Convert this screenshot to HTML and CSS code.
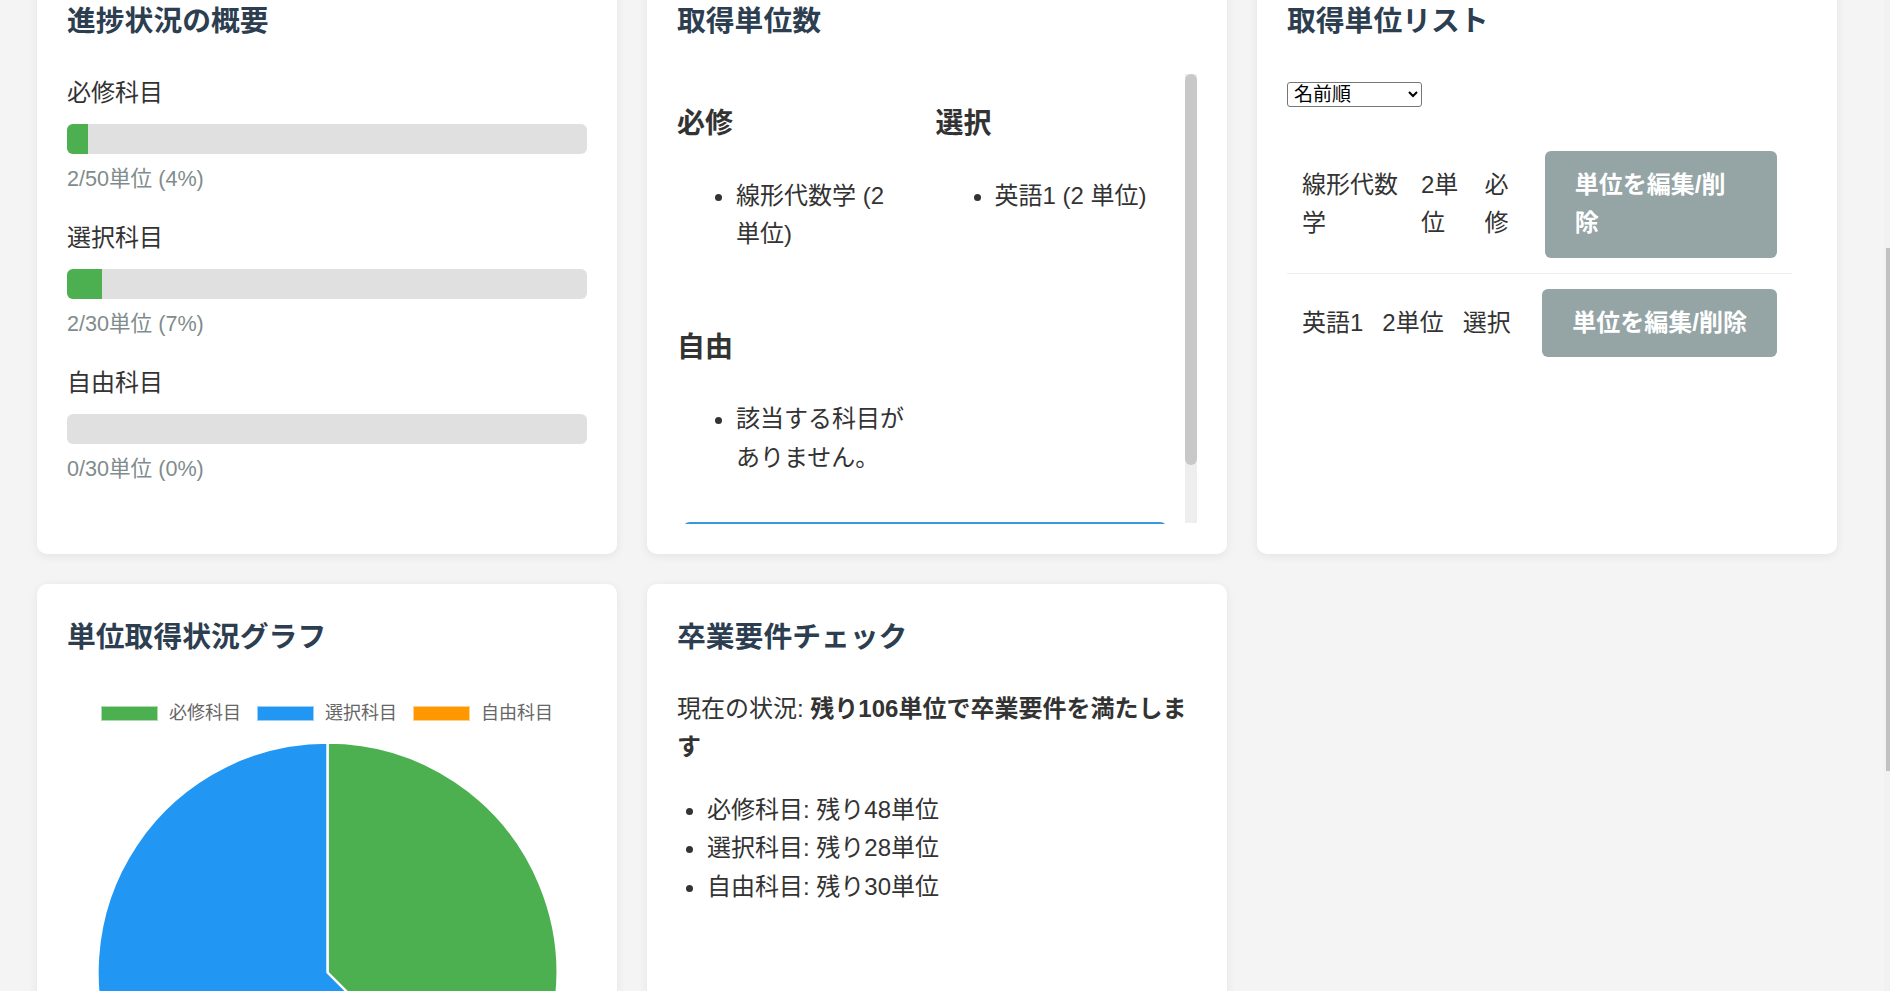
FILE: index.html
```html
<!DOCTYPE html>
<html lang="ja">
<head>
<meta charset="UTF-8">
<title>単位管理ダッシュボード</title>
<link rel="stylesheet" href="styles.css">
</head>
<body>
<main class="dashboard">
  <section class="card">
    <h2 class="card-title">進捗状況の概要</h2>
    <div class="progress-item">
      <div class="progress-label">必修科目</div>
      <div class="progress-track"><div class="progress-fill" style="width:4%"></div></div>
      <div class="progress-text">2/50単位 (4%)</div>
    </div>
    <div class="progress-item">
      <div class="progress-label">選択科目</div>
      <div class="progress-track"><div class="progress-fill" style="width:6.67%"></div></div>
      <div class="progress-text">2/30単位 (7%)</div>
    </div>
    <div class="progress-item">
      <div class="progress-label">自由科目</div>
      <div class="progress-track"><div class="progress-fill" style="width:0%"></div></div>
      <div class="progress-text">0/30単位 (0%)</div>
    </div>
  </section>

  <section class="card">
    <h2 class="card-title">取得単位数</h2>
    <div class="credit-scroll">
      <div class="credit-scroll-content">
        <div class="type-grid">
          <div class="type-section">
            <h3 class="type-title">必修</h3>
            <ul class="type-list"><li>線形代数学 (2 単位)</li></ul>
          </div>
          <div class="type-section">
            <h3 class="type-title">選択</h3>
            <ul class="type-list"><li>英語1 (2 単位)</li></ul>
          </div>
          <div class="type-section">
            <h3 class="type-title">自由</h3>
            <ul class="type-list"><li>該当する科目がありません。</li></ul>
          </div>
        </div>
        <div class="total-box"></div>
      </div>
      <div class="scroll-track"><div class="scroll-thumb"></div></div>
    </div>
  </section>

  <section class="card">
    <h2 class="card-title">取得単位リスト</h2>
    <div class="sort-bar">
      <select class="sort-select">
        <option>名前順</option>
      </select>
    </div>
    <ul class="credit-list">
      <li class="credit-row">
        <span class="c-name">線形代数学</span>
        <span class="c-credits">2単位</span>
        <span class="c-type">必修</span>
        <button class="edit-btn" type="button">単位を編集/削除</button>
      </li>
      <li class="credit-row">
        <span class="c-name">英語1</span>
        <span class="c-credits">2単位</span>
        <span class="c-type">選択</span>
        <button class="edit-btn" type="button">単位を編集/削除</button>
      </li>
    </ul>
  </section>

  <section class="card">
    <h2 class="card-title">単位取得状況グラフ</h2>
    <div class="chart">
      <div class="legend">
        <span class="legend-item"><span class="legend-box legend-green"></span>必修科目</span>
        <span class="legend-item"><span class="legend-box legend-blue"></span>選択科目</span>
        <span class="legend-item"><span class="legend-box legend-orange"></span>自由科目</span>
      </div>
      <svg class="pie" width="463" height="463" viewBox="0 0 463 463">
        <path d="M231.5 231.5 L231.5 1.5 A230 230 0 0 1 394.13 394.13 Z" fill="#4caf50" stroke="#ffffff" stroke-width="2.4" stroke-linejoin="round"/>
        <path d="M231.5 231.5 L394.13 394.13 A230 230 0 1 1 231.5 1.5 Z" fill="#2196f3" stroke="#ffffff" stroke-width="2.4" stroke-linejoin="round"/>
      </svg>
    </div>
  </section>

  <section class="card">
    <h2 class="card-title">卒業要件チェック</h2>
    <p class="status">現在の状況: <strong>残り106単位で卒業要件を満たします</strong></p>
    <ul class="remain-list">
      <li>必修科目: 残り48単位</li>
      <li>選択科目: 残り28単位</li>
      <li>自由科目: 残り30単位</li>
    </ul>
  </section>
</main>
<div class="page-scrollbar"><div class="page-scrollbar-thumb"></div></div>
<script src="script.js"></script>
</body>
</html>
```

FILE: styles.css
```css
html, body {
  margin: 0;
  padding: 0;
}

body {
  background: #f4f4f4;
  color: #333333;
  font-family: "Liberation Sans", "Noto Sans CJK JP", sans-serif;
  font-size: 24px;
  line-height: 1.6;
}

.dashboard {
  display: grid;
  grid-template-columns: repeat(3, minmax(0, 1fr));
  gap: 30px;
  width: 1800px;
  padding: 438px 0 173px 37px;
  align-items: stretch;
}

.card {
  background: #ffffff;
  border-radius: 10px;
  box-shadow: 0 2px 10px rgba(0, 0, 0, 0.07);
  padding: 30px;
  min-width: 0;
}

.card-title {
  margin: 0 0 30px;
  font-size: 28.8px;
  line-height: 46px;
  color: #2c3e50;
  font-weight: 700;
}

/* progress */
.progress-item {
  margin-bottom: 22px;
}
.progress-label {
  margin-bottom: 12px;
}
.progress-track {
  height: 30px;
  background: #e0e0e0;
  border-radius: 6px;
  overflow: hidden;
}
.progress-fill {
  height: 100%;
  background: #4caf50;
}
.progress-text {
  margin-top: 8px;
  font-size: 21.6px;
  color: #7f8c8d;
}

/* credits by type */
.credit-scroll {
  display: flex;
  height: 450px;
}
.credit-scroll-content {
  flex: 1 1 auto;
  min-width: 0;
  overflow: hidden;
}
.scroll-track {
  flex: 0 0 12px;
  height: 449px;
  background: #eeeeee;
}
.scroll-thumb {
  height: 391px;
  background: #c8c8c8;
  border-radius: 6px;
}
.type-grid {
  display: flex;
  flex-wrap: wrap;
  column-gap: 30px;
  row-gap: 20px;
}
.type-section {
  width: 45%;
}
.type-title {
  margin: 28px 0;
  font-size: 28px;
  line-height: 1.6;
  color: #333333;
}
.type-list {
  margin: 30px 0 24px;
  padding-left: 59px;
}
.total-box {
  margin: 21px 0 8px 5px;
  width: 482px;
  height: 60px;
  border: 2px solid #3498db;
  border-radius: 8px;
}

/* credit list */
.sort-bar {
  padding-top: 8px;
  margin-bottom: 29px;
  line-height: 0;
}
.sort-select {
  width: 135px;
  height: 25px;
  padding: 0 2px;
  font-family: "Liberation Sans", "Noto Sans CJK JP", sans-serif;
  font-size: 19px;
  color: #000000;
  background: #ffffff;
  border: 1px solid #767676;
  border-radius: 3px;
}
.credit-list {
  list-style: none;
  margin: 0;
  padding: 0;
  width: calc(100% - 15px);
}
.credit-row {
  display: flex;
  align-items: center;
  padding: 15px;
  border-bottom: 1px solid #eeeeee;
}
.credit-row:last-child {
  border-bottom: none;
}
.c-name {
  flex: 0 1 auto;
  max-width: 100px;
  margin-right: 19px;
}
.c-credits {
  flex: 0 2 auto;
  margin-right: 19px;
}
.c-type {
  flex: 1 1 auto;
  margin-right: 19px;
}
.edit-btn {
  flex: 0 0.1 auto;
  padding: 15px 30px;
  border: none;
  border-radius: 6px;
  background: #95a5a6;
  color: #ffffff;
  font-family: "Liberation Sans", "Noto Sans CJK JP", sans-serif;
  font-size: 24px;
  font-weight: 700;
  line-height: 1.6;
  text-align: left;
  cursor: pointer;
}

/* chart */
.chart {
  display: flex;
  flex-direction: column;
  align-items: center;
}
.legend {
  display: flex;
  justify-content: center;
  gap: 16px;
  padding-top: 16px;
  font-size: 18px;
  line-height: 15px;
  color: #666666;
}
.legend-item {
  display: flex;
  align-items: center;
  gap: 11px;
}
.legend-box {
  width: 57px;
  height: 15px;
  box-sizing: border-box;
  border: 1px solid rgba(255, 255, 255, 0.55);
}
.legend-green { background: #4caf50; }
.legend-blue { background: #2196f3; }
.legend-orange { background: #ff9800; }
.pie {
  display: block;
  margin-top: 20px;
}

/* graduation check */
.status {
  margin: 0 0 24px;
}
.remain-list {
  margin: 0;
  padding-left: 30px;
}

/* window scrollbar (drawn over the page edge) */
.page-scrollbar {
  position: fixed;
  top: 0;
  right: 0;
  width: 6px;
  height: 100vh;
  background: #f1f1f1;
}
.page-scrollbar-thumb {
  margin: 248px 0 0 2px;
  height: 523px;
  background: #c1c1c1;
}
```

FILE: script.js
```js
function keepPosition() {
  window.scrollTo(0, 470);
}
keepPosition();
window.addEventListener('load', keepPosition);
```
